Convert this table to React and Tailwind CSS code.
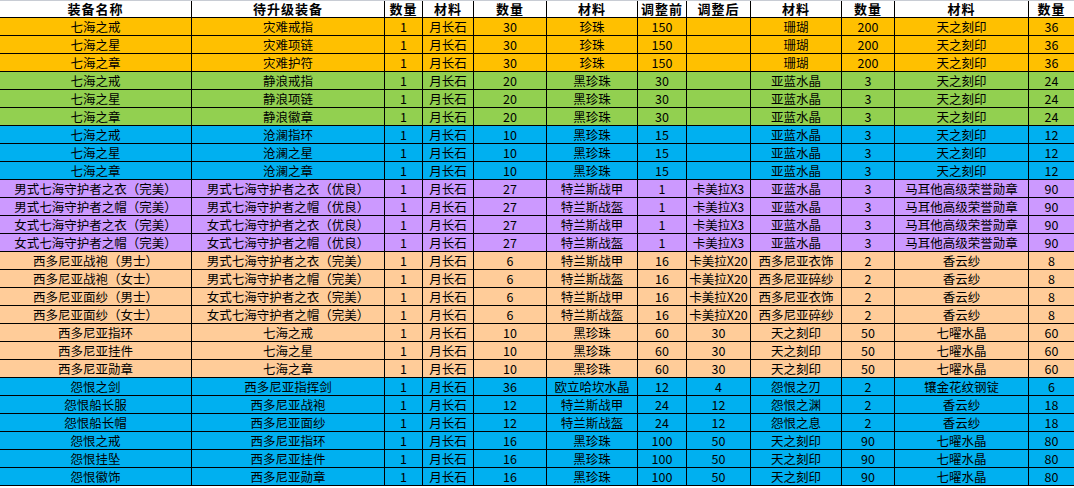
import React from 'react';

const COLS = 'grid grid-cols-[192px_193px_38px_51px_73px_91px_49px_64px_91px_53px_134px_45px]';

const headers = ['装备名称', '待升级装备', '数量', '材料', '数量', '材料', '调整前', '调整后', '材料', '数量', '材料', '数量'];

const ORANGE = 'bg-[#ffc000]';
const GREEN = 'bg-[#92d050]';
const BLUE = 'bg-[#00b0f0]';
const PURPLE = 'bg-[#cc99ff]';
const PEACH = 'bg-[#ffcc99]';

const rows = [
    [ORANGE, '七海之戒', '灾难戒指', '1', '月长石', '30', '珍珠', '150', '', '珊瑚', '200', '天之刻印', '36'],
    [ORANGE, '七海之星', '灾难项链', '1', '月长石', '30', '珍珠', '150', '', '珊瑚', '200', '天之刻印', '36'],
    [ORANGE, '七海之章', '灾难护符', '1', '月长石', '30', '珍珠', '150', '', '珊瑚', '200', '天之刻印', '36'],
    [GREEN, '七海之戒', '静浪戒指', '1', '月长石', '20', '黑珍珠', '30', '', '亚蓝水晶', '3', '天之刻印', '24'],
    [GREEN, '七海之星', '静浪项链', '1', '月长石', '20', '黑珍珠', '30', '', '亚蓝水晶', '3', '天之刻印', '24'],
    [GREEN, '七海之章', '静浪徽章', '1', '月长石', '20', '黑珍珠', '30', '', '亚蓝水晶', '3', '天之刻印', '24'],
    [BLUE, '七海之戒', '沧澜指环', '1', '月长石', '10', '黑珍珠', '15', '', '亚蓝水晶', '3', '天之刻印', '12'],
    [BLUE, '七海之星', '沧澜之星', '1', '月长石', '10', '黑珍珠', '15', '', '亚蓝水晶', '3', '天之刻印', '12'],
    [BLUE, '七海之章', '沧澜之章', '1', '月长石', '10', '黑珍珠', '15', '', '亚蓝水晶', '3', '天之刻印', '12'],
    [PURPLE, '男式七海守护者之衣（完美）', '男式七海守护者之衣（优良）', '1', '月长石', '27', '特兰斯战甲', '1', '卡美拉X3', '亚蓝水晶', '3', '马耳他高级荣誉勋章', '90'],
    [PURPLE, '男式七海守护者之帽（完美）', '男式七海守护者之帽（优良）', '1', '月长石', '27', '特兰斯战盔', '1', '卡美拉X3', '亚蓝水晶', '3', '马耳他高级荣誉勋章', '90'],
    [PURPLE, '女式七海守护者之衣（完美）', '女式七海守护者之衣（优良）', '1', '月长石', '27', '特兰斯战甲', '1', '卡美拉X3', '亚蓝水晶', '3', '马耳他高级荣誉勋章', '90'],
    [PURPLE, '女式七海守护者之帽（完美）', '女式七海守护者之帽（优良）', '1', '月长石', '27', '特兰斯战盔', '1', '卡美拉X3', '亚蓝水晶', '3', '马耳他高级荣誉勋章', '90'],
    [PEACH, '西多尼亚战袍（男士）', '男式七海守护者之衣（完美）', '1', '月长石', '6', '特兰斯战甲', '16', '卡美拉X20', '西多尼亚衣饰', '2', '香云纱', '8'],
    [PEACH, '西多尼亚战袍（女士）', '男式七海守护者之帽（完美）', '1', '月长石', '6', '特兰斯战盔', '16', '卡美拉X20', '西多尼亚碎纱', '2', '香云纱', '8'],
    [PEACH, '西多尼亚面纱（男士）', '女式七海守护者之衣（完美）', '1', '月长石', '6', '特兰斯战甲', '16', '卡美拉X20', '西多尼亚衣饰', '2', '香云纱', '8'],
    [PEACH, '西多尼亚面纱（女士）', '女式七海守护者之帽（完美）', '1', '月长石', '6', '特兰斯战盔', '16', '卡美拉X20', '西多尼亚碎纱', '2', '香云纱', '8'],
    [PEACH, '西多尼亚指环', '七海之戒', '1', '月长石', '10', '黑珍珠', '60', '30', '天之刻印', '50', '七曜水晶', '60'],
    [PEACH, '西多尼亚挂件', '七海之星', '1', '月长石', '10', '黑珍珠', '60', '30', '天之刻印', '50', '七曜水晶', '60'],
    [PEACH, '西多尼亚勋章', '七海之章', '1', '月长石', '10', '黑珍珠', '60', '30', '天之刻印', '50', '七曜水晶', '60'],
    [BLUE, '怨恨之剑', '西多尼亚指挥剑', '1', '月长石', '36', '欧立哈坎水晶', '12', '4', '怨恨之刃', '2', '镶金花纹钢锭', '6'],
    [BLUE, '怨恨船长服', '西多尼亚战袍', '1', '月长石', '12', '特兰斯战甲', '24', '12', '怨恨之渊', '2', '香云纱', '18'],
    [BLUE, '怨恨船长帽', '西多尼亚面纱', '1', '月长石', '12', '特兰斯战盔', '24', '12', '怨恨之息', '2', '香云纱', '18'],
    [BLUE, '怨恨之戒', '西多尼亚指环', '1', '月长石', '16', '黑珍珠', '100', '50', '天之刻印', '90', '七曜水晶', '80'],
    [BLUE, '怨恨挂坠', '西多尼亚挂件', '1', '月长石', '16', '黑珍珠', '100', '50', '天之刻印', '90', '七曜水晶', '80'],
    [BLUE, '怨恨徽饰', '西多尼亚勋章', '1', '月长石', '16', '黑珍珠', '100', '50', '天之刻印', '90', '七曜水晶', '80'],
];

const Cell = ({ children, last, className = '' }) => (
    <div className={`flex items-center justify-center whitespace-nowrap leading-[16px] ${last ? '' : 'border-r border-black'} ${className}`}>
        {children}
    </div>
);

export default function App() {
    return (
        <div className="w-[1074px] h-[488px] bg-white text-black overflow-hidden font-['SimSun','Noto_Sans_CJK_SC',sans-serif]">
            {/* header row */}
            <div className={`${COLS} h-[18px] bg-white border-t border-t-[#c8ccd4] border-b border-black`}>
                {headers.map((h, i) => (
                    <Cell key={i} last={i === headers.length - 1} className="text-[13px] font-bold tracking-[1px]">{h}</Cell>
                ))}
            </div>

            {/* data rows */}
            {rows.map(([bg, ...cells], r) => (
                <div key={r} className={`${COLS} h-[18px] border-b border-black ${bg}`}>
                    {cells.map((c, i) => (
                        <Cell key={i} last={i === cells.length - 1} className="text-[12.5px]">{c}</Cell>
                    ))}
                </div>
            ))}
        </div>
    );
}
